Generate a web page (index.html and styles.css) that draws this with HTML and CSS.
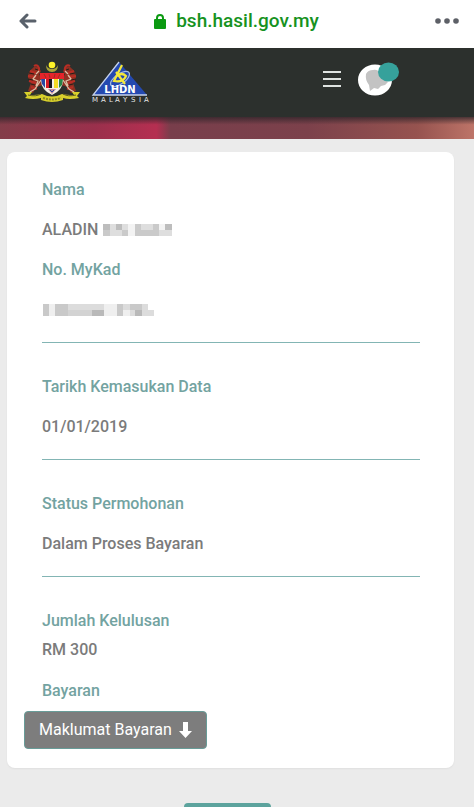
FILE: index.html
```html
<!DOCTYPE html>
<html lang="ms">
<head>
<meta charset="utf-8">
<meta name="viewport" content="width=device-width, initial-scale=1">
<title>bsh.hasil.gov.my</title>
<link rel="stylesheet" href="styles.css">
</head>
<body>
<header class="browser">
  <button class="icon-button" type="button" aria-label="Kembali">
    <svg width="20" height="16" viewBox="0 0 20 16" fill="none" stroke="#59616b" stroke-width="3" stroke-linecap="round" stroke-linejoin="round"><path d="M17 8H3M9 2 3 8l6 6"/></svg>
  </button>
  <div class="address">
    <svg width="12" height="15" viewBox="0 0 12 15"><path d="M3 7V4a3 3 0 0 1 6 0v3" fill="none" stroke="#0b9a12" stroke-width="2"/><rect y="5" width="12" height="10" rx="1" fill="#0b9a12"/></svg>
    <span>bsh.hasil.gov.my</span>
  </div>
  <button class="icon-button" type="button" aria-label="Menu pelayar">
    <svg width="25" height="6" viewBox="0 0 25 6" fill="#5d6067"><circle cx="3" cy="3" r="2.800"/><circle cx="12" cy="3" r="2.800"/><circle cx="21" cy="3" r="2.800"/></svg>
  </button>
</header>

<nav class="navbar">
  <a class="logos" href="#" aria-label="LHDN Malaysia">
    <svg width="58" height="42" viewBox="0 0 58 42">
      <path d="M23 4a6.500 6.500 0 0 0 12 0q0 7-6 7t-6-7" fill="#a8a339"/>
      <circle cx="29" cy="4" r="3.300" fill="#fff329"/>
      <g id="tiger">
        <path d="M18 10c-2-4-6-6-8-3-3 2-5 5-5 10l3 5-3 8 5 2 3-6 7-2 2-7-6-3z" fill="#8f3022"/>
        <path d="M11 5c3-2 6 1 5 5M7 10l6 2M5 15l8 1M6 20l7 2M8 26l6 2" fill="none" stroke="#b92d24" stroke-width="2"/>
        <path d="M13 14l-3 4 5 2-2 5M16 10l-3 3M18 19l-6 9-5 3" fill="none" stroke="#dcc0a6" stroke-width="1.300"/>
        <path d="M6 12l5 1M5 18l5 1M8 23l4 1M12 8l3 1" stroke="#271d19" stroke-width="1"/>
      </g>
      <use href="#tiger" transform="translate(58 0) scale(-1 1)"/>
      <path d="M18 12h22v7q0 10-11 15-11-5-11-15z" fill="#f4f0e5"/>
      <path d="M17 12h24v6H17z" fill="#e5242b"/>
      <path d="M21 13l2 4M26 13l1 4M32 13l-1 4M37 13l-2 4" stroke="#9b2f20"/>
      <path d="M18 18h4v9l-3-4z" fill="#2647a5"/>
      <path d="M23 18h3v9h-3z" fill="#d51b27"/>
      <path d="M26 18h3v9h-3z" fill="#15151b"/>
      <path d="M31 18h4v9h-4z" fill="#f4dc23"/>
      <path d="M36 18h4l-1 6-3 3z" fill="#278546"/>
      <path d="M25 28h8l-4 5z" fill="#c58898"/>
      <path d="M27 29l2 2 2-2" fill="none" stroke="#2647a5"/>
      <path d="M1 31h8l-2 3q8 0 12-1 10 5 20 0 4 1 12 1l-2-3h8l-3 4 2 2q-10 2-16 0v2q-11 4-22 0v-2q-8 2-16 0l2-2z" fill="#d8d02c"/>
      <path d="M5 34q8 2 13-1M53 34q-8 2-13-1" fill="none" stroke="#5e5c22"/>
      <path d="M20 37q9 3 18 0" fill="none" stroke="#8f8a25" stroke-width="2" stroke-dasharray="2 1"/>
    </svg>
    <svg width="60" height="42" viewBox="0 0 60 42">
      <path d="M28 1 2 34h54z" fill="#2449b0"/>
      <path d="M28 1 2 34h54" fill="none" stroke="#c5d2ed" stroke-width="1.300"/>
      <ellipse cx="29" cy="18" rx="11" ry="5" fill="none" stroke="#a3bbe2" stroke-width="1.200" transform="rotate(-35 29 18)"/>
      <path d="M31 4 23 20q9 2 12-5-4-4-9 0M25 11l9 12" fill="none" stroke="#f3e83a" stroke-width="2.200"/>
      <text class="logo-name" x="29" y="32" text-anchor="middle">LHDN</text>
      <text class="logo-country" x="1" y="41">M</text><text class="logo-country" x="10" y="41">A</text><text class="logo-country" x="18" y="41">L</text><text class="logo-country" x="24" y="41">A</text><text class="logo-country" x="32" y="41">Y</text><text class="logo-country" x="40" y="41">S</text><text class="logo-country" x="48" y="41">I</text><text class="logo-country" x="53" y="41">A</text>
    </svg>
  </a>
  <div class="actions">
    <button class="icon-button" type="button" aria-label="Menu">
      <svg width="18" height="18" viewBox="0 0 18 18" stroke="#dfe3e1" stroke-width="2"><path d="M0 2h18M0 9h18M0 16h18"/></svg>
    </button>
    <button class="icon-button" type="button" aria-label="Pemberitahuan">
      <svg width="42" height="34" viewBox="0 0 42 34"><ellipse cx="17" cy="18" rx="17" ry="15.500" fill="#fff"/><path d="M8 12q2-4 7-4 5-1 8 4l7 8-3 3-4 1-3 3-4-1-4 3-1-6q-4-5-3-11z" fill="#c3c3c3"/><ellipse cx="30.500" cy="10" rx="10.500" ry="9.500" fill="#36a19b"/></svg>
    </button>
  </div>
</nav>
<div class="banner"></div>

<main>
  <section class="card">
    <dl class="group">
      <dt>Nama</dt>
      <dd>ALADIN
        <svg class="mosaic" width="69" height="12" viewBox="0 0 69 12" shape-rendering="crispEdges"><path d="M0 0h69v12H0z" fill="#dedede"/><path d="M0 0h7v6H0zM13 0h6v6h-6zM62 0h7v6h-7z" fill="#bdbdbd"/><path d="M0 6h7v6H0zM19 6h6v6h-6zM32 0h6v12h-6zM38 6h18v6H38zM50 0h6v6h-6z" fill="#cacaca"/><path d="M25 0h7v12h-7zM56 0h6v6h-6z" fill="#f3f3f3"/></svg>
      </dd>
      <dt>No. MyKad</dt>
      <dd>
        <svg class="mosaic" width="112" height="12" viewBox="0 0 112 12" shape-rendering="crispEdges"><path d="M1 0h105v6h6v6H1z" fill="#dcdcdc"/><path d="M1 0h6v12H1zM13 0h13v12H13zM75 0h6v12h-6zM88 0h12v6H88z" fill="#c9c9c9"/><path d="M50 6h12v6H50zM93 6h7v6h-7z" fill="#b9b9b9"/><path d="M7 0h6v12H7zM62 0h13v12H62zM81 6h7v6h-7z" fill="#efefef"/><path d="M26 6h24v6H26z" fill="#d3d3d3"/></svg>
      </dd>
    </dl>
    <dl class="group">
      <dt>Tarikh Kemasukan Data</dt>
      <dd>01/01/2019</dd>
    </dl>
    <dl class="group">
      <dt>Status Permohonan</dt>
      <dd>Dalam Proses Bayaran</dd>
    </dl>
    <dl class="group payment">
      <dt>Jumlah Kelulusan</dt>
      <dd>RM 300</dd>
      <dt>Bayaran</dt>
    </dl>
    <button class="details" type="button">Maklumat Bayaran
      <svg width="13" height="16" viewBox="0 0 13 16" fill="#fff"><path d="M4 0h5v9h4l-6.500 7L0 9h4z"/></svg>
    </button>
  </section>
  <button class="back" type="button" aria-label="Kembali ke halaman utama"></button>
</main>
</body>
</html>
```

FILE: styles.css
```css
* {
  box-sizing: border-box;
}

body {
  display: flex;
  flex-direction: column;
  height: 100vh;
  margin: 0;
  overflow: hidden;
  background: #ebebeb;
  color: #7b7b7b;
  font: 500 16px/20px Roboto, sans-serif;
}

svg {
  display: block;
}

button {
  font: inherit;
  cursor: pointer;
}

.icon-button {
  padding: 0;
  border: 0;
  background: none;
}

.browser {
  display: flex;
  flex: none;
  align-items: center;
  justify-content: space-between;
  height: 48px;
  padding: 0 14px 6px 18px;
  background: #fff;
}

.address {
  display: flex;
  align-items: center;
  gap: 10px;
  color: #169221;
  font-size: 19px;
}

.navbar {
  display: flex;
  flex: none;
  align-items: center;
  justify-content: space-between;
  height: 69px;
  padding: 0 74px 0 23px;
  background: #2c302d;
}

.logos,
.actions {
  display: flex;
  align-items: center;
}

.logos {
  gap: 10px;
  padding-bottom: 2px;
}

.actions {
  gap: 17px;
  padding-bottom: 8px;
}

.logo-name {
  fill: #fff;
  font: 700 10px "DejaVu Sans", sans-serif;
}

.logo-country {
  fill: #e4e6e5;
  font: 400 7px "DejaVu Sans", sans-serif;
}

.banner {
  flex: none;
  height: 22px;
  background:
    linear-gradient(#30252acc, transparent 35%),
    linear-gradient(90deg, #833d49, #9a304c 20%, #b52f51 33%, #783e4b 36%, #7c414b 65%, #96534f 88%, #bd7468);
}

main {
  display: flex;
  flex: none;
  flex-direction: column;
  align-items: center;
  padding: 13px 20px 0 7px;
}

.card {
  width: 100%;
  padding: 28px 34px 19px 35px;
  border-radius: 8px;
  background: #fff;
  box-shadow: 0 1px 2px #0000000d;
}

.group {
  display: grid;
  gap: 20px;
  margin: 0 0 34px;
  padding-bottom: 22px;
  border-bottom: 1px solid #83b5b4;
}

.group dt {
  color: #73a3a1;
}

.group dd {
  display: flex;
  align-items: center;
  gap: 5px;
  min-height: 20px;
  margin: 0;
}

.group + .payment {
  gap: 9px;
  margin-bottom: 10px;
  padding-bottom: 0;
  border: 0;
}

.payment dd {
  margin-bottom: 12px;
}

.details {
  display: flex;
  align-items: center;
  gap: 7px;
  height: 38px;
  margin-left: -18px;
  padding: 0 14px;
  border: 1px solid #689c98;
  border-radius: 4px;
  background: #7d7d7d;
  color: #fff;
  font-weight: 400;
}

.back {
  width: 87px;
  height: 38px;
  margin: 35px 6px 0 0;
  border: 0;
  border-radius: 4px;
  background: #5ca39d;
}
```
